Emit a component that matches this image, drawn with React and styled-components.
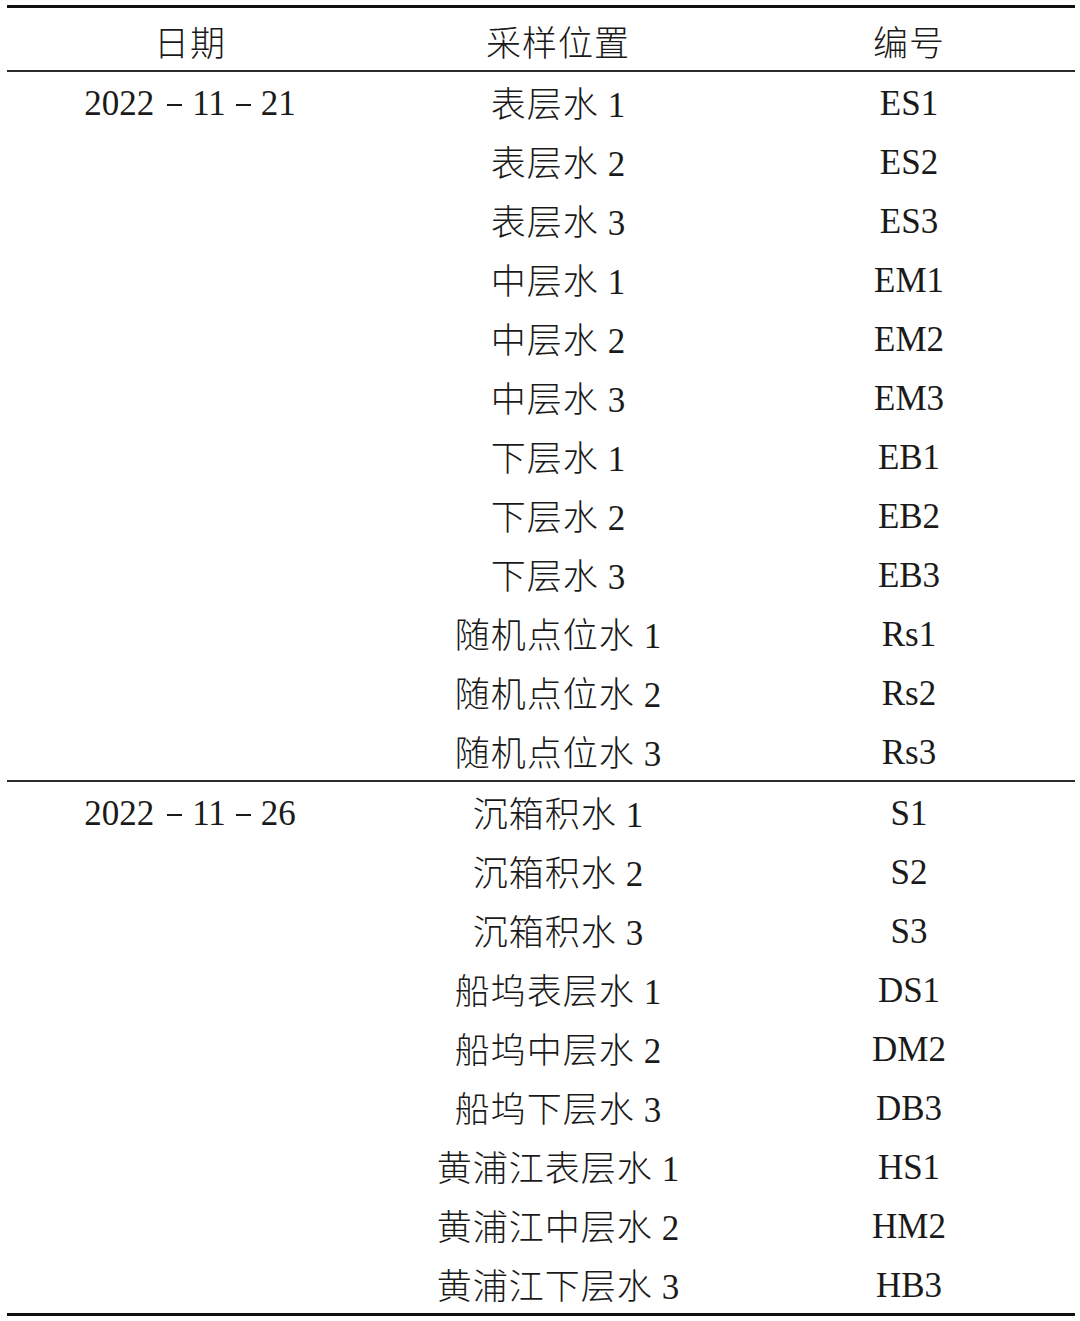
import React from "react";
import styled, { createGlobalStyle } from "styled-components";

const GlobalStyle = createGlobalStyle`
  html, body {
    margin: 0;
    padding: 0;
    background: #ffffff;
  }
  body {
    font-family: "Liberation Serif", "Noto Sans CJK SC", serif;
    color: #1a1a1a;
  }
`;

const Page = styled.div`
  width: 1080px;
  height: 1321px;
  padding: 5px 0 0 7px;
  box-sizing: border-box;
`;

const Table = styled.div`
  width: 1068px;
  border-top: 3px solid #111;
  border-bottom: 3px solid #111;
`;

const Row = styled.div`
  display: grid;
  grid-template-columns: 366px 370px 1fr;
  align-items: center;
  height: ${(p) => p.$h}px;
  line-height: 1;
`;

const Group = styled.div`
  border-top: 2px solid #2a2a2a;
`;

const Cell = styled.div`
  text-align: center;
  padding-top: ${(p) => (p.$head ? 6 : 3)}px;
  white-space: pre;
  font-size: 35px;
`;

const Cjk = styled.span`
  font-family: "Noto Sans CJK SC", sans-serif;
  font-weight: 300;
  font-size: 35px;
  letter-spacing: 1px;
`;

const Dash = styled.span`
  display: inline-block;
  width: 15px;
  height: 2px;
  background: #1a1a1a;
  vertical-align: 9px;
  margin: 0 10px 0 ${(p) => (p.$first ? 13 : 10)}px;
`;

const DateText = ({ parts }) => (
  <>
    {parts[0]}
    <Dash $first />
    {parts[1]}
    <Dash />
    {parts[2]}
  </>
);

const groups = [
  {
    date: ["2022", "11", "21"],
    rows: [
      ["表层水", "1", "ES1"],
      ["表层水", "2", "ES2"],
      ["表层水", "3", "ES3"],
      ["中层水", "1", "EM1"],
      ["中层水", "2", "EM2"],
      ["中层水", "3", "EM3"],
      ["下层水", "1", "EB1"],
      ["下层水", "2", "EB2"],
      ["下层水", "3", "EB3"],
      ["随机点位水", "1", "Rs1"],
      ["随机点位水", "2", "Rs2"],
      ["随机点位水", "3", "Rs3"],
    ],
  },
  {
    date: ["2022", "11", "26"],
    rows: [
      ["沉箱积水", "1", "S1"],
      ["沉箱积水", "2", "S2"],
      ["沉箱积水", "3", "S3"],
      ["船坞表层水", "1", "DS1"],
      ["船坞中层水", "2", "DM2"],
      ["船坞下层水", "3", "DB3"],
      ["黄浦江表层水", "1", "HS1"],
      ["黄浦江中层水", "2", "HM2"],
      ["黄浦江下层水", "3", "HB3"],
    ],
  },
];

export default function App() {
  return (
    <Page>
      <GlobalStyle />
      <Table>
        <Row $h={62}>
          <Cell $head><Cjk>日期</Cjk></Cell>
          <Cell $head><Cjk>采样位置</Cjk></Cell>
          <Cell $head><Cjk>编号</Cjk></Cell>
        </Row>
        {groups.map((g, gi) => (
          <Group key={gi}>
            {g.rows.map((r, i) => (
              <Row key={i} $h={59}>
                <Cell>{i === 0 ? <DateText parts={g.date} /> : ""}</Cell>
                <Cell>
                  <Cjk>{r[0]}</Cjk> {r[1]}
                </Cell>
                <Cell>{r[2]}</Cell>
              </Row>
            ))}
          </Group>
        ))}
      </Table>
    </Page>
  );
}
